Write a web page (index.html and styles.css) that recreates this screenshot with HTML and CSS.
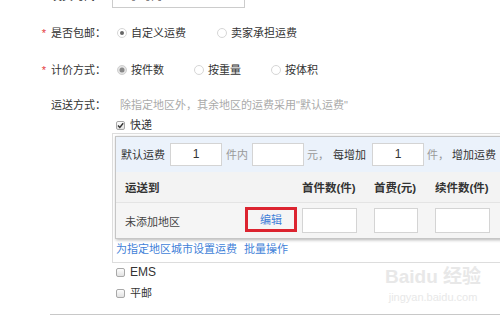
FILE: index.html
```html
<!DOCTYPE html>
<html lang="zh-CN">
<head>
<meta charset="utf-8">
<link rel="stylesheet" href="styles.css">
</head>
<body>
<div class="clip">
  <div class="row top">
    <div class="label">发货时间：</div>
    <div class="content top-content"><div class="time-input">1小时内</div></div>
  </div>
</div>

<div class="row r1">
  <div class="label"><span class="req">*</span>是否包邮：</div>
  <div class="content">
    <span class="opt"><span class="radio on-dot"></span>自定义运费</span>
    <span class="opt"><span class="radio"></span>卖家承担运费</span>
  </div>
</div>

<div class="row r2">
  <div class="label"><span class="req">*</span>计价方式：</div>
  <div class="content">
    <span class="opt o2"><span class="radio on-fill"></span>按件数</span>
    <span class="opt o2"><span class="radio"></span>按重量</span>
    <span class="opt o2"><span class="radio"></span>按体积</span>
  </div>
</div>

<div class="ship">
  <div class="label">运送方式：</div>
  <div class="ship-body">
    <div class="hint">除指定地区外，其余地区的运费采用"默认运费"</div>
    <div class="check-line"><span class="cb checked"><svg viewBox="0 0 9 9" width="9" height="9"><path d="M2 4.6 L3.8 6.4 L7.2 2.2" fill="none" stroke="#333" stroke-width="1.4"/></svg></span>快递</div>
    <div class="outer">
      <div class="inner">
        <div class="fee-row">
          <span class="dark">默认运费</span>
          <span class="num in1">1</span>
          <span class="grey g1">件内</span>
          <span class="num in2"></span>
          <span class="grey g2">元，</span>
          <span class="dark d2">每增加</span>
          <span class="num in3">1</span>
          <span class="grey g3">件，</span>
          <span class="dark d3">增加运费</span>
        </div>
        <div class="grid thead">
          <div class="c-first">运送到</div>
          <div></div>
          <div>首件数(件)</div>
          <div>首费(元)</div>
          <div>续件数(件)</div>
          <div></div>
        </div>
        <div class="grid tbody">
          <div class="c-first">未添加地区</div>
          <div><span class="edit-box"><a class="link">编辑</a></span></div>
          <div><span class="cell-input w55"></span></div>
          <div><span class="cell-input w44"></span></div>
          <div><span class="cell-input w55"></span></div>
          <div></div>
        </div>
      </div>
      <div class="links"><a class="link">为指定地区城市设置运费</a><a class="link batch">批量操作</a></div>
    </div>
    <div class="check-line ems"><span class="cb"></span>EMS</div>
    <div class="check-line post"><span class="cb"></span>平邮</div>
  </div>
</div>

<div class="divider"></div>

<div class="watermark">
  <div class="wm-big">Bai<span class="paw">du</span> 经验</div>
  <div class="wm-small">jingyan.baidu.com</div>
</div>
</body>
</html>
```

FILE: styles.css
```css
body {
  margin: 0;
  width: 500px;
  height: 322px;
  overflow: hidden;
  position: relative;
  background: #fff;
  color: #333;
  font-family: "Liberation Sans", "Noto Sans CJK SC", sans-serif;
  font-size: 11px;
}

.clip {
  height: 8px;
  overflow: hidden;
}

.row {
  display: flex;
  align-items: center;
}

.top {
  height: 24px;
  margin-top: -16px;
}

.label {
  width: 106px;
  flex: none;
  text-align: right;
  line-height: 16px;
  color: #333;
}

.req {
  color: #e4393c;
  margin-right: 5px;
}

.content {
  margin-left: 10px;
  display: flex;
  align-items: center;
  line-height: 16px;
}

.top-content {
  margin-left: 6px;
}

.time-input {
  width: 121px;
  height: 22px;
  border: 1px solid #ccc;
  line-height: 22px;
  padding-left: 10px;
  box-sizing: content-box;
  color: #666;
}

.r1 {
  margin-top: 15px;
  height: 20px;
}

.r2 {
  margin-top: 17px;
  height: 20px;
}

.opt {
  display: inline-flex;
  align-items: center;
  margin-right: 30px;
}

.o2 {
  margin-right: 29px;
}

.radio {
  width: 10px;
  height: 10px;
  box-sizing: border-box;
  border: 1px solid #d6d6d6;
  border-radius: 50%;
  margin: 0 4px 0 1px;
  position: relative;
  background: #fff;
}

.on-dot::after,
.on-fill::after {
  content: "";
  position: absolute;
  left: 50%;
  top: 50%;
  border-radius: 50%;
  transform: translate(-50%, -50%);
}

.on-dot::after {
  width: 4px;
  height: 4px;
  background: #666;
}

.on-fill {
  background: #e4e4e4;
  border-color: #d0d0d0;
}

.on-fill::after {
  width: 5px;
  height: 5px;
  background: #888;
}

.ship {
  margin-top: 17px;
  display: flex;
  align-items: flex-start;
}

.ship-body {
  margin-left: 10px;
  flex: none;
}

.hint {
  color: #aaa;
  line-height: 16px;
  padding-left: 4px;
}

.check-line {
  margin-top: 4px;
  height: 16px;
  display: flex;
  align-items: center;
  line-height: 16px;
}

.cb {
  width: 9px;
  height: 9px;
  box-sizing: border-box;
  border: 1px solid #a8a8a8;
  border-radius: 2px;
  background: linear-gradient(#fdfdfd, #e2e2e2);
  margin-right: 5px;
  display: inline-flex;
  align-items: center;
  justify-content: center;
  overflow: visible;
}

.cb svg {
  display: block;
  flex: none;
}

.outer {
  margin-left: -4px;
  width: 420px;
  border-top: 1px solid #ddd;
  border-left: 1px solid #ddd;
  border-bottom: 1px solid #ddd;
  padding: 2px 0 3px 2px;
}

.inner {
  width: 410px;
  border: 1px solid #c6c6c6;
  box-shadow: 1px 1px 3px rgba(0, 0, 0, 0.3);
}

.fee-row {
  height: 35px;
  background: #ebf2fb;
  display: flex;
  align-items: center;
  padding-left: 5px;
  line-height: 16px;
}

.dark {
  color: #333;
  flex: none;
}

.grey {
  color: #999;
  flex: none;
}

.num {
  width: 52px;
  height: 23px;
  box-sizing: border-box;
  border: 1px solid #d4d4d4;
  background: #fff;
  text-align: center;
  line-height: 21px;
  font-size: 12px;
  color: #333;
  flex: none;
}

.in1 { margin-left: 5px; }
.g1 { margin-left: 4px; width: 22px; }
.in2 { margin-left: 4px; }
.g2 { margin-left: 3px; width: 22px; }
.d2 { margin-left: 4px; }
.in3 { margin-left: 6px; }
.g3 { margin-left: 3px; width: 22px; }
.d3 { margin-left: 3px; }

.grid {
  display: grid;
  grid-template-columns: 129px 57px 72px 61px 70px 1fr;
  align-items: center;
}

.thead {
  height: 30px;
  background: #f3f3f3;
  border-bottom: 1px solid #e4e4e4;
  font-weight: bold;
  color: #333;
  font-size: 11.5px;
}

.tbody {
  height: 35px;
  background: #f5f5f5;
  color: #444;
}

.c-first {
  padding-left: 9px;
}

.edit-box {
  display: flex;
  align-items: center;
  justify-content: center;
  width: 52px;
  height: 25px;
  box-sizing: border-box;
  border: 3px solid #dc2430;
  margin-top: -3px;
  background: #f5f5f5;
}

.link {
  color: #3f7fd8;
  text-decoration: none;
}

.cell-input {
  display: block;
  height: 25px;
  box-sizing: border-box;
  border: 1px solid #d4d4d4;
  background: #fff;
}

.w55 { width: 55px; }
.w44 { width: 44px; }

.links {
  height: 20px;
  line-height: 20px;
  padding-left: 1px;
  font-size: 11px;
}

.batch {
  margin-left: 7px;
}

.ems {
  margin-top: 1px;
  font-size: 12px;
}

.post {
  margin-top: 5px;
}

.divider {
  margin: 13px 0 0 50px;
  height: 0;
  border-top: 1px solid #c8c8c8;
}

.watermark {
  position: absolute;
  left: 385px;
  top: 266px;
  color: #e8e8e8;
  text-align: center;
}

.wm-big {
  font-size: 19px;
  font-weight: bold;
  line-height: 22px;
}

.wm-small {
  font-size: 11px;
  line-height: 14px;
  margin-top: 2px;
}
```
